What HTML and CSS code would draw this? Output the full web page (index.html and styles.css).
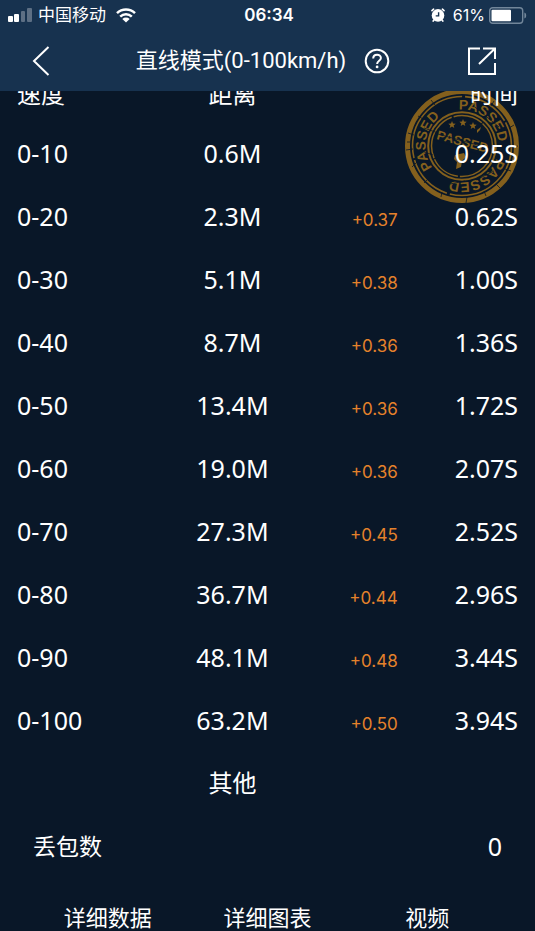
FILE: index.html
```html
<!DOCTYPE html>
<html lang="zh-CN">
<head>
  <meta charset="UTF-8">
  <meta name="viewport" content="width=device-width, initial-scale=1.0">
  <title>直线模式</title>
  <link rel="stylesheet" href="styles.css">
</head>
<body>
  <header class="top">
    <div class="status">
      <div class="status-left">
        <svg width="24" height="14" viewBox="0 0 24 14" fill="#fff">
          <rect x="0" y="8" width="5" height="6" rx="1"/>
          <rect x="6" y="6" width="5" height="8" rx="1"/>
          <rect x="13" y="3" width="4" height="11" rx="1" opacity=".3"/>
          <rect x="19" y="0" width="5" height="14" rx="1" opacity=".3"/>
        </svg>
        <span class="carrier">中国移动</span>
        <svg width="20" height="15" viewBox="0 0 20 15">
          <path d="M1 5.2a13 13 0 0 1 18 0M4.2 8.6a8.4 8.4 0 0 1 11.6 0" fill="none" stroke="#fff" stroke-width="2.5"/>
          <path d="M6.3 11a5.4 5.4 0 0 1 7.4 0L10 14.6z" fill="#fff"/>
        </svg>
      </div>
      <span class="clock">06:34</span>
      <div class="status-right">
        <svg width="14" height="14" viewBox="0 0 14 14">
          <circle cx="7" cy="7.4" r="6.3" fill="#fff"/>
          <path d="M1 2.6 2.600 1.200M13 2.600 11.400 1.200M3 12l-.8 1M11 12l.8 1" stroke="#fff" stroke-width="1.7" stroke-linecap="round"/>
          <path d="M7.6 4.200v3.700H4.700" fill="none" stroke="#17324f" stroke-width="1.4"/>
        </svg>
        <span class="percent">61%</span>
        <svg width="38" height="17" viewBox="0 0 38 17">
          <rect x=".7" y=".7" width="33" height="15.6" rx="3" fill="none" stroke="#72869a" stroke-width="1.4"/>
          <rect x="2.5" y="2.7" width="19.5" height="11.6" rx="1" fill="#fff"/>
          <path d="M35.4 5.5c2.4.6 2.4 5.4 0 6z" fill="#72869a"/>
        </svg>
      </div>
    </div>
    <div class="navbar">
      <button class="icon-btn" aria-label="返回">
        <svg width="18" height="32" viewBox="0 0 18 32">
          <path d="M16.5 2 2 16l14.500 14" fill="none" stroke="#fff" stroke-width="2"/>
        </svg>
      </button>
      <div class="heading">
        <h1>直线模式(0-100km/h)</h1>
        <button class="icon-btn" aria-label="帮助">
          <svg width="26" height="26" viewBox="0 0 26 26" fill="none" stroke="#fff" stroke-width="2">
            <circle cx="13" cy="13" r="11.300"/>
            <path d="M9.200 10.600c0-5.200 7.700-5.100 7.700-.6 0 2.800-3.800 2.800-3.800 6"/>
            <circle cx="13.100" cy="18.900" r="1.400" fill="#fff" stroke="none"/>
          </svg>
        </button>
      </div>
      <button class="icon-btn" aria-label="分享">
        <svg width="28" height="28" viewBox="0 0 28 28" fill="none" stroke="#fff" stroke-width="2">
          <path d="M12 1.500H1V27h26V16M15 1.500h12V12M26.500 2 11 17"/>
        </svg>
      </button>
    </div>
  </header>

  <main class="result">
    <svg class="stamp" width="116" height="116" viewBox="0 0 116 116">
      <defs>
        <path id="ring" d="M58 21.500a36.500 36.500 0 0 1 0 73a36.500 36.500 0 0 1 0-73"/>
      </defs>
      <g fill="none" stroke="#84601d">
        <circle cx="58" cy="58" r="54.500" stroke-width="5"/>
        <circle cx="58" cy="58" r="49.500" stroke-width="1.600" stroke-dasharray="90 3 48 2"/>
        <circle cx="58" cy="58" r="33.800" stroke-width="2"/>
        <circle cx="58" cy="58" r="30.500" stroke-width="1.500" stroke-dasharray="50 2 30 1"/>
      </g>
      <g class="stamp-text">
        <text transform="rotate(-5 58 58)"><textPath href="#ring">PASSED</textPath></text>
        <text transform="rotate(110 58 58)"><textPath href="#ring">PASSED</textPath></text>
        <text transform="rotate(234 58 58)"><textPath href="#ring">PASSED</textPath></text>
        <text class="stamp-mid" x="32" y="51" transform="rotate(15 32 51)">PASSED</text>
      </g>
      <g fill="#84601d">
        <path id="star" d="M48 33l1 2.500 2.700.2-2.100 1.700.7 2.600-2.300-1.400-2.300 1.400.7-2.600-2.100-1.700 2.700-.2z"/>
        <use href="#star" x="11" y="-2"/>
        <use href="#star" x="21" y="1"/>
        <path d="M73 42l4-3-1 3-3 3z"/>
        <path d="M51 67l9-2 2 4-4 4-1 6-5 2 1-7-3-3z"/>
      </g>
      <!-- worn ink -->
      <path d="M4 45l6 2M2 62l7-1M8 79l5-5M20 95l4-4M37 109l1-5M62 115l1-6M82 108l-2-5M107 83l-6-2M114 58l-6 1M110 37l-5 3M90 13l-3 5M27 12l4 5M14 28l5 3M3 54l3 0M96 100l-4-4M30 52l50 16M34 46l50 14M71 19l24 20M20 40l14 5M15 62l14 5M72 92l18-9M46 96l15-3" stroke="#091728" stroke-width=".8"/>
    </svg>
    <table class="times">
      <colgroup>
        <col class="col-speed"><col class="col-dist"><col class="col-diff"><col class="col-time">
      </colgroup>
      <thead>
        <tr><th>速度</th><th>距离</th><th></th><th>时间</th></tr>
      </thead>
      <tbody>
        <tr><td>0-10</td><td>0.6M</td><td></td><td>0.25S</td></tr>
        <tr><td>0-20</td><td>2.3M</td><td>+0.37</td><td>0.62S</td></tr>
        <tr><td>0-30</td><td>5.1M</td><td>+0.38</td><td>1.00S</td></tr>
        <tr><td>0-40</td><td>8.7M</td><td>+0.36</td><td>1.36S</td></tr>
        <tr><td>0-50</td><td>13.4M</td><td>+0.36</td><td>1.72S</td></tr>
        <tr><td>0-60</td><td>19.0M</td><td>+0.36</td><td>2.07S</td></tr>
        <tr><td>0-70</td><td>27.3M</td><td>+0.45</td><td>2.52S</td></tr>
        <tr><td>0-80</td><td>36.7M</td><td>+0.44</td><td>2.96S</td></tr>
        <tr><td>0-90</td><td>48.1M</td><td>+0.48</td><td>3.44S</td></tr>
        <tr><td>0-100</td><td>63.2M</td><td>+0.50</td><td>3.94S</td></tr>
      </tbody>
      <tbody class="other">
        <tr><th></th><th>其他</th><th></th><th></th></tr>
        <tr class="lost"><td>丢包数</td><td></td><td></td><td>0</td></tr>
      </tbody>
    </table>
  </main>

  <nav class="tabs">
    <a href="#data">详细数据</a>
    <a href="#chart">详细图表</a>
    <a href="#video">视频</a>
  </nav>
</body>
</html>
```
FILE: styles.css
```css
* {
  margin: 0;
  padding: 0;
  box-sizing: border-box;
}

:root {
  --bar: #17324f;
  --bg: #091728;
  --orange: #e5822b;
}

body {
  display: flex;
  flex-direction: column;
  height: 100vh;
  overflow: hidden;
  background-color: var(--bg);
  color: #fff;
  font-family: "Noto Sans", "Noto Sans CJK SC", sans-serif;
}

.top {
  position: relative;
  z-index: 2;
  background-color: var(--bar);
  font-family: Inter, "Noto Sans CJK SC", sans-serif;
}

.status {
  display: grid;
  grid-template-columns: 1fr auto 1fr;
  align-items: center;
  height: 30px;
  padding: 0 8px;
}

.status svg,
.icon-btn svg {
  display: block;
}

.status-left,
.status-right {
  display: flex;
  align-items: center;
}

.status-left {
  gap: 6px;
}

.carrier {
  margin-right: 4px;
  font-size: 17px;
  line-height: 24px;
}

.clock {
  padding-left: 3px;
  font-size: 17px;
  font-weight: 600;
}

.status-right {
  justify-content: flex-end;
  gap: 4px;
}

.percent {
  margin-left: 4px;
  font-size: 16px;
}

.navbar {
  display: flex;
  justify-content: space-between;
  align-items: center;
  height: 61px;
  padding: 0 39px 0 32px;
}

.heading {
  display: flex;
  align-items: center;
  gap: 18px;
  margin-left: 8px;
}

h1 {
  font-family: Roboto, "Noto Sans CJK SC", sans-serif;
  font-size: 22px;
  font-weight: 400;
  line-height: 30px;
}

.icon-btn {
  border: none;
  background: none;
  cursor: pointer;
}

.result {
  position: relative;
  flex: 1;
  /* list is scrolled half a row under the bar */
  margin-top: -33px;
  padding: 0 17px;
}

.stamp {
  position: absolute;
  top: 30px;
  right: 15px;
}

.stamp-text {
  fill: #84601d;
  font-family: "Liberation Sans", Arial, sans-serif;
  font-size: 14px;
  font-weight: 700;
}

.stamp-mid {
  font-size: 13px;
}

.times {
  position: relative;
  width: 100%;
  table-layout: fixed;
  border-collapse: collapse;
  font-size: 25px;
}

.col-speed {
  width: 27%;
}

.col-dist {
  width: 32%;
}

.col-diff {
  width: 17%;
}

.col-time {
  width: 24%;
}

.times tr {
  height: 63px;
}

.times th {
  font-size: 24px;
  font-weight: 400;
}

.times th,
.times td {
  line-height: 36px;
  text-align: left;
  white-space: nowrap;
}

.times thead th {
  padding-top: 8px;
}

.times th:nth-child(2),
.times td:nth-child(2) {
  text-align: center;
}

.times td:nth-child(3) {
  padding-top: 8px;
  color: var(--orange);
  font-family: Inter, sans-serif;
  font-size: 17px;
  text-align: right;
}

.times th:last-child,
.times td:last-child {
  text-align: right;
}

.lost td:first-child {
  padding-left: 16px;
  font-size: 23px;
}

.times .lost td:last-child {
  padding-right: 16px;
}

.tabs {
  display: grid;
  grid-template-columns: repeat(3, 1fr);
  padding: 0 28px;
}

.tabs a {
  color: #fff;
  font-size: 22px;
  line-height: 28px;
  text-align: center;
  text-decoration: none;
}
```
